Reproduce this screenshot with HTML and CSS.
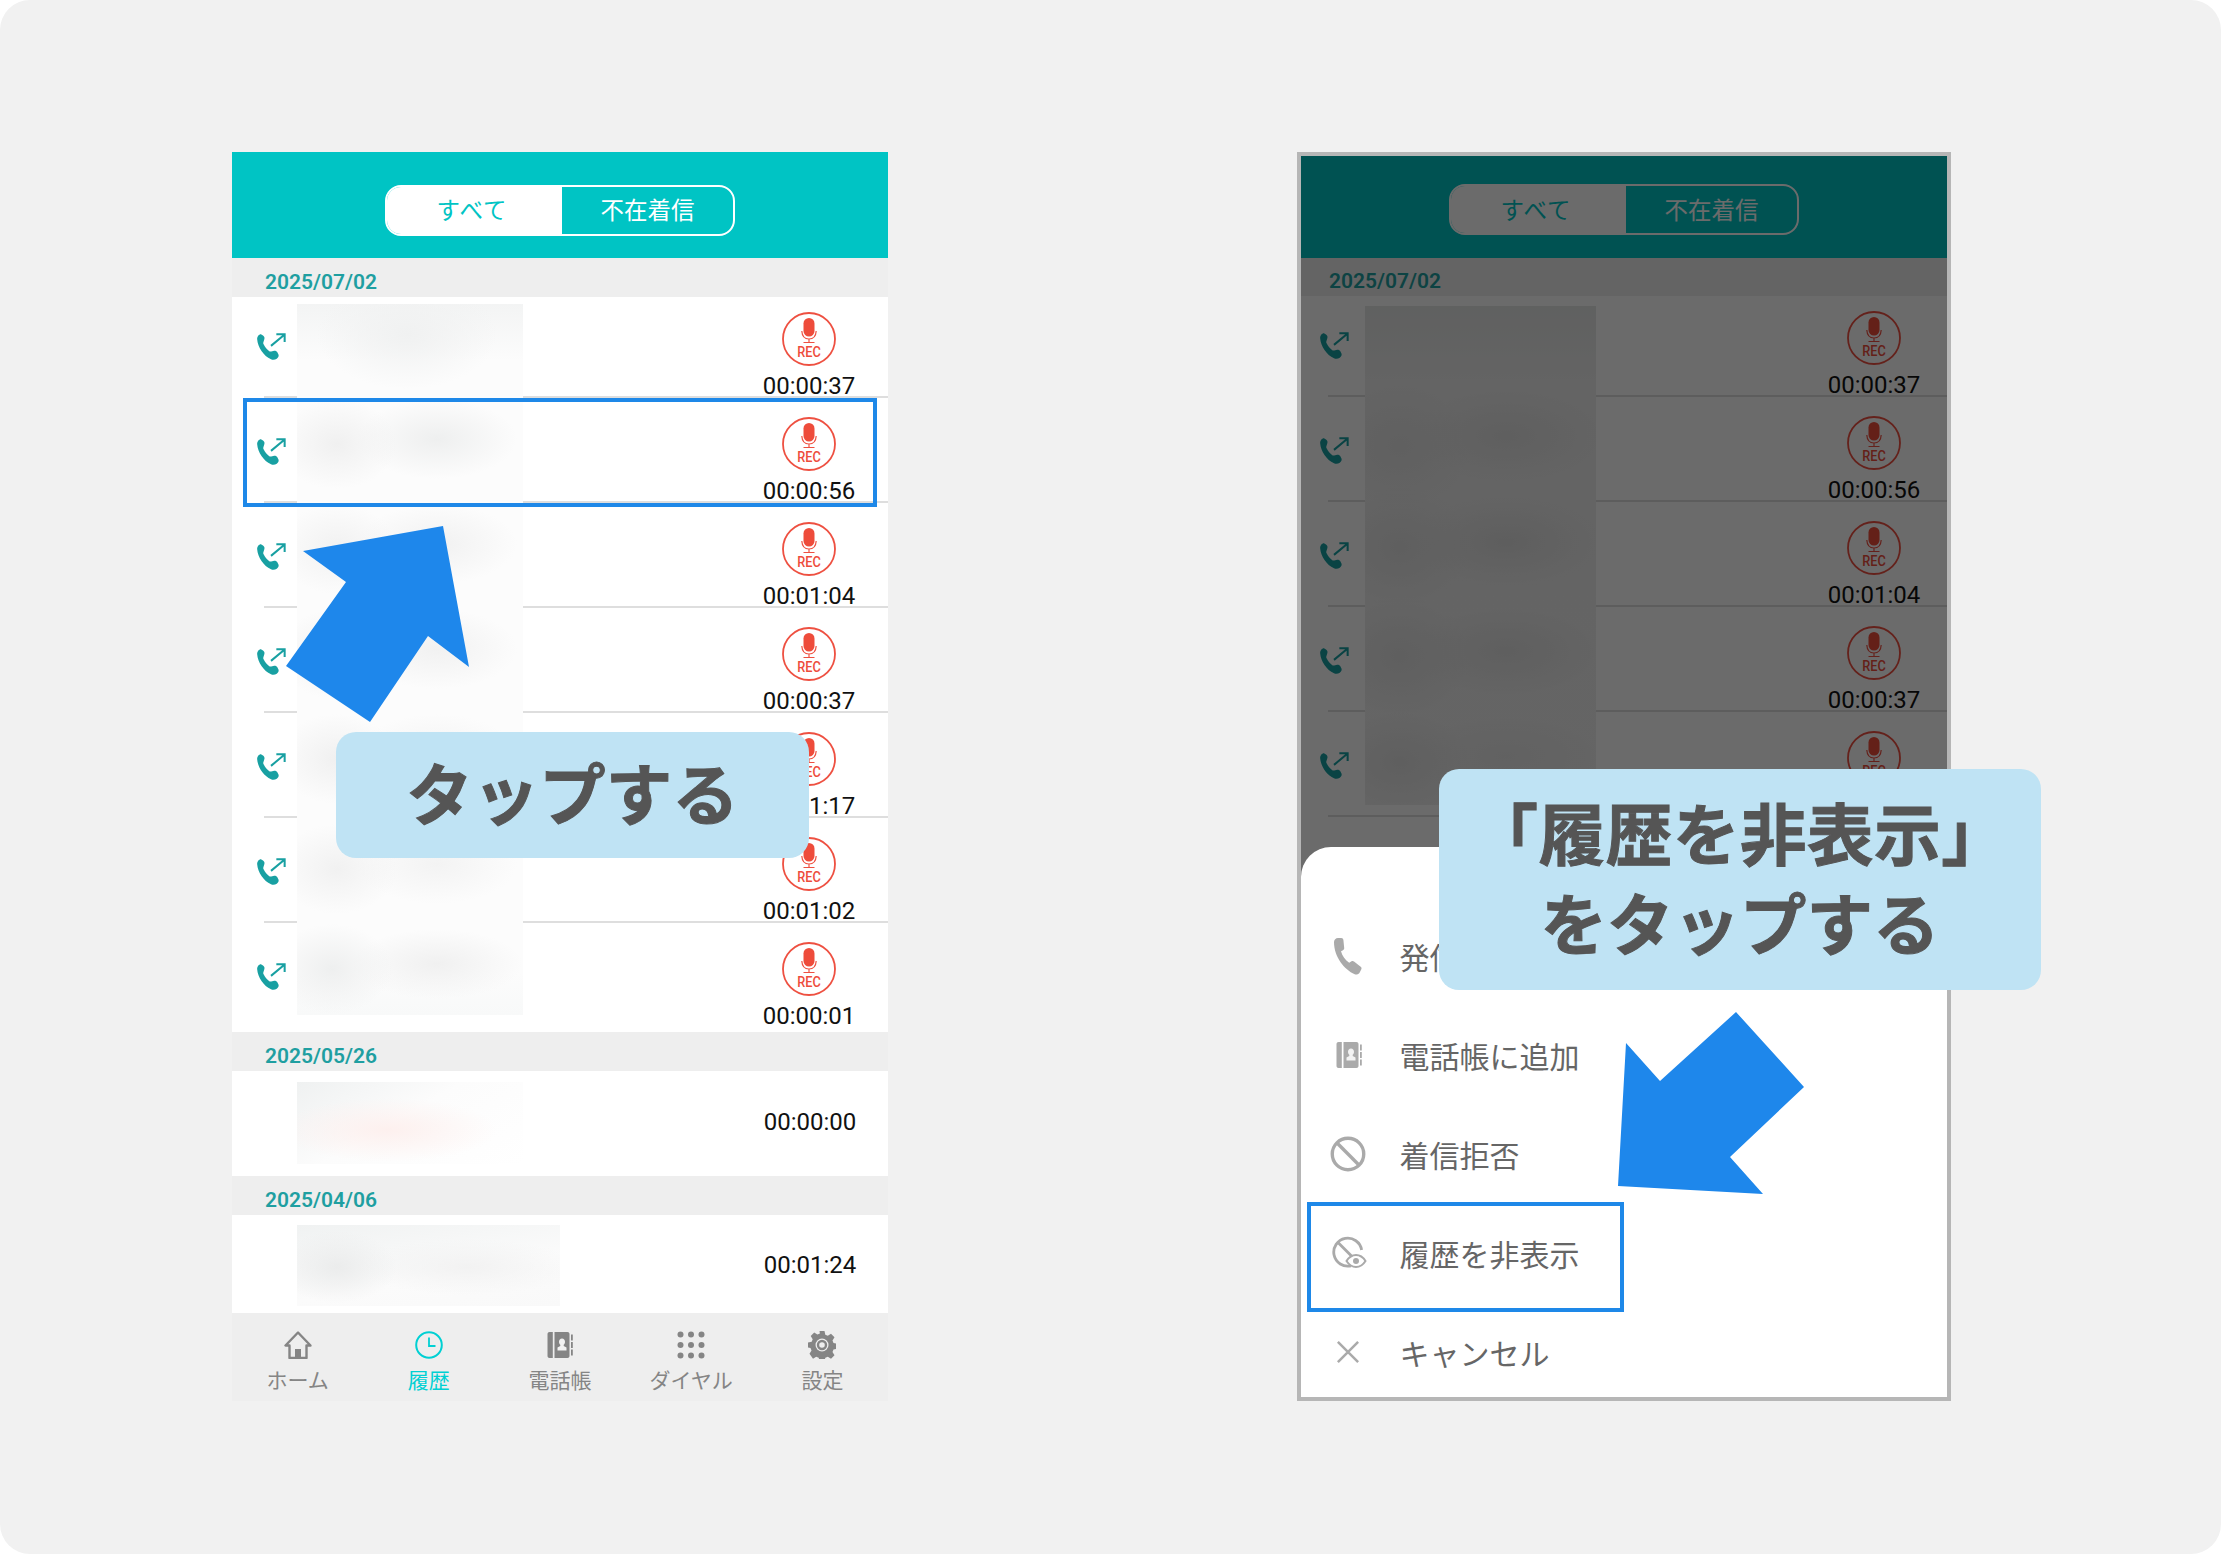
FILE: index.html
```html
<!DOCTYPE html>
<html lang="ja">
<head>
<meta charset="utf-8">
<title>履歴を非表示</title>
<link rel="stylesheet" href="styles.css">
</head>
<body>
<svg class="defs" width="0" height="0" aria-hidden="true">
  <defs>
    <symbol id="i-call" viewBox="0 0 30 30">
      <path d="M2 6.500C2 4.200 3.600 2 5.600 2L7.500 3.200C8.600 4 9.200 5.200 8.800 6.600L7.800 9.800C7.600 10.600 7.800 11.200 8.200 11.800C9.500 14.400 11.200 16.400 13.400 18C14 18.400 14.600 18.400 15.200 18.200L18 17.600C19.200 17.400 20.200 18 20.800 18.800L22 21C22.600 22.400 21.800 24 20.400 25C18.800 26.200 16.800 26.400 15 25.600C8 22.200 2.600 14.600 2 6.500Z" fill="#18a0a2"/>
      <path d="M15 13L27.500 2.500M20 2.100h7.800v7.300" fill="none" stroke="#18a0a2" stroke-width="1.900"/>
    </symbol>
    <symbol id="i-rec" viewBox="0 0 54 54">
      <circle cx="27" cy="27" r="26" fill="#fff" stroke="#ee5041" stroke-width="1.800"/>
      <rect x="21.500" y="6" width="11" height="18.500" rx="5.500" fill="#ee4c3b"/>
      <path d="M19.800 19c.3 5 3 8 7.200 8s6.900-3 7.200-8M27 27v3.200M21.500 30.500h11" fill="none" stroke="#ee5041" stroke-width="1.200"/>
    </symbol>
    <symbol id="i-book" viewBox="0 0 28 28">
      <path d="M3.500 1h3.300v26H3.500c-1.100 0-2-.9-2-2V3c0-1.100.9-2 2-2zM8.500 1h13c1.100 0 2 .9 2 2v22c0 1.100-.9 2-2 2h-13z" fill="currentColor"/>
      <path d="M25 3.500h1.800v6H25zM25 11h1.800v6H25zM25 18.500h1.800v6H25z" fill="currentColor"/>
      <path d="M16 7.500c1.800 0 3 1.400 3 3.300 0 1.300-.5 2.400-1.300 3v1.200l2.800 1.400v3.100H11.500v-3.100l2.800-1.400v-1.200c-.8-.6-1.300-1.700-1.300-3 0-1.900 1.200-3.300 3-3.300z" fill="#f2f2f2"/>
    </symbol>
  </defs>
</svg>
<main class="canvas">
  <section class="shot shot-left">
    <div class="phone">
      <header class="topbar">
        <div class="toggle"><span class="seg seg-on">すべて</span><span class="seg">不在着信</span></div>
      </header>
      <div class="date">2025/07/02</div>
      <div class="group">
        <div class="smudge smudge-a"></div>
        <div class="row rec"><svg class="call"><use href="#i-call"/></svg><div class="right"><svg class="recicon"><use href="#i-rec"/></svg><span class="recword">REC</span><span class="time">00:00:37</span></div></div>
        <div class="row rec"><svg class="call"><use href="#i-call"/></svg><div class="right"><svg class="recicon"><use href="#i-rec"/></svg><span class="recword">REC</span><span class="time">00:00:56</span></div></div>
        <div class="row rec"><svg class="call"><use href="#i-call"/></svg><div class="right"><svg class="recicon"><use href="#i-rec"/></svg><span class="recword">REC</span><span class="time">00:01:04</span></div></div>
        <div class="row rec"><svg class="call"><use href="#i-call"/></svg><div class="right"><svg class="recicon"><use href="#i-rec"/></svg><span class="recword">REC</span><span class="time">00:00:37</span></div></div>
        <div class="row rec"><svg class="call"><use href="#i-call"/></svg><div class="right"><svg class="recicon"><use href="#i-rec"/></svg><span class="recword">REC</span><span class="time">00:01:17</span></div></div>
        <div class="row rec"><svg class="call"><use href="#i-call"/></svg><div class="right"><svg class="recicon"><use href="#i-rec"/></svg><span class="recword">REC</span><span class="time">00:01:02</span></div></div>
        <div class="row rec last"><svg class="call"><use href="#i-call"/></svg><div class="right"><svg class="recicon"><use href="#i-rec"/></svg><span class="recword">REC</span><span class="time">00:00:01</span></div></div>
      </div>
      <div class="date">2025/05/26</div>
      <div class="group">
        <div class="smudge smudge-b"></div>
        <div class="row plain last"><div class="right"><span class="time">00:00:00</span></div></div>
      </div>
      <div class="date date-short">2025/04/06</div>
      <div class="group">
        <div class="smudge smudge-c"></div>
        <div class="row plain last short"><div class="right"><span class="time">00:01:24</span></div></div>
      </div>
      <nav class="tabs">
        <div class="tab"><svg class="tabicon" viewBox="0 0 28 28"><path d="M14 1.500L1.500 14.500H5.500V27h17V14.500h4z" fill="none" stroke="currentColor" stroke-width="2.400" stroke-linejoin="round"/><path d="M11 27v-9h6v9z" fill="currentColor"/></svg><span>ホーム</span></div>
        <div class="tab tab-on"><svg class="tabicon" viewBox="0 0 28 28"><circle cx="14" cy="14" r="12.800" fill="none" stroke="currentColor" stroke-width="2"/><path d="M14 6.500V15h6.500" fill="none" stroke="currentColor" stroke-width="1.800"/></svg><span>履歴</span></div>
        <div class="tab"><svg class="tabicon"><use href="#i-book"/></svg><span>電話帳</span></div>
        <div class="tab"><svg class="tabicon" viewBox="0 0 28 28"><g fill="currentColor"><circle cx="3.500" cy="3.500" r="3"/><circle cx="14" cy="3.500" r="3"/><circle cx="24.500" cy="3.500" r="3"/><circle cx="3.500" cy="14" r="3"/><circle cx="14" cy="14" r="3"/><circle cx="24.500" cy="14" r="3"/><circle cx="3.500" cy="24.500" r="3"/><circle cx="14" cy="24.500" r="3"/><circle cx="24.500" cy="24.500" r="3"/></g></svg><span>ダイヤル</span></div>
        <div class="tab"><svg class="tabicon" viewBox="0 0 28 28"><path d="M11.500 0h5l.8 3.700 2.500 1 3.200-2 3.500 3.500-2 3.200 1 2.500 3.700.8v5l-3.700.8-1 2.500 2 3.200-3.500 3.500-3.200-2-2.500 1-.8 3.700h-5l-.8-3.700-2.500-1-3.200 2L1.500 22.700l2-3.200-1-2.500L0 16.500v-5l3.700-.8 1-2.500-2-3.200L6.200 1.500l3.200 2 2.500-1z" fill="currentColor"/><circle cx="14" cy="14" r="6.500" fill="#eee"/><circle cx="14" cy="14" r="4" fill="none" stroke="currentColor" stroke-width="2.400"/></svg><span>設定</span></div>
      </nav>
    </div>
    <div class="hl hl-row"></div>
    <svg class="arrow arrow-left" viewBox="0 0 200 210"><polygon points="17,25 157,0 183,141 142,110 84,196 0,140 60,56"/></svg>
    <div class="bubble bubble-left">タップする</div>
  </section>

  <section class="shot shot-right">
    <div class="frame">
      <div class="phone phone-dim">
        <header class="topbar">
          <div class="toggle"><span class="seg seg-on">すべて</span><span class="seg">不在着信</span></div>
        </header>
        <div class="date">2025/07/02</div>
        <div class="group">
          <div class="smudge smudge-d"></div>
          <div class="row rec"><svg class="call"><use href="#i-call"/></svg><div class="right"><svg class="recicon"><use href="#i-rec"/></svg><span class="recword">REC</span><span class="time">00:00:37</span></div></div>
          <div class="row rec"><svg class="call"><use href="#i-call"/></svg><div class="right"><svg class="recicon"><use href="#i-rec"/></svg><span class="recword">REC</span><span class="time">00:00:56</span></div></div>
          <div class="row rec"><svg class="call"><use href="#i-call"/></svg><div class="right"><svg class="recicon"><use href="#i-rec"/></svg><span class="recword">REC</span><span class="time">00:01:04</span></div></div>
          <div class="row rec"><svg class="call"><use href="#i-call"/></svg><div class="right"><svg class="recicon"><use href="#i-rec"/></svg><span class="recword">REC</span><span class="time">00:00:37</span></div></div>
          <div class="row rec"><svg class="call"><use href="#i-call"/></svg><div class="right"><svg class="recicon"><use href="#i-rec"/></svg><span class="recword">REC</span></div></div>
        </div>
        <div class="scrim"></div>
        <div class="sheet">
          <div class="item"><svg class="itemicon itemicon-phone" viewBox="0 0 30 38"><path d="M1 5C1 2.800 2.800 1 5 1h3.200c1.200 0 2.100.9 2.200 2l.8 8c.1.900-.4 1.800-1.200 2.200l-2 1.100c1.300 4.700 4.200 8.700 8.200 11.400l2.300-1.400c.8-.5 1.800-.4 2.500.2l6.700 5.300c.9.700 1.100 1.900.5 2.800l-1.500 2.800c-1 1.700-3.100 2.500-5 1.900C11.300 32.500 1 20 1 5z" fill="#aaa"/></svg><span>発信</span></div>
          <div class="item"><svg class="itemicon itemicon-book"><use href="#i-book"/></svg><span>電話帳に追加</span></div>
          <div class="item"><svg class="itemicon" viewBox="0 0 32 32"><circle cx="16" cy="16" r="14" fill="none" stroke="#aaa" stroke-width="3"/><path d="M6.500 6.500l19 19" stroke="#aaa" stroke-width="3"/></svg><span>着信拒否</span></div>
          <div class="item"><svg class="itemicon itemicon-eye" viewBox="0 0 36 32"><path d="M19 28.800A14 14 0 1 1 29.600 13" fill="none" stroke="#aaa" stroke-width="2.800"/><path d="M6 5.500l14 14" stroke="#aaa" stroke-width="2.800"/><path d="M14.500 24c2.600-4 6-6 9.500-6s7 2 9.500 6c-2.500 4-6 6-9.500 6s-6.900-2-9.500-6z" fill="#fff" stroke="#aaa" stroke-width="2"/><circle cx="24" cy="24" r="3" fill="#aaa"/></svg><span>履歴を非表示</span></div>
          <div class="item"><svg class="itemicon" viewBox="0 0 32 32"><path d="M7 7l18 18M25 7L7 25" stroke="#aaa" stroke-width="2.200"/></svg><span>キャンセル</span></div>
        </div>
      </div>
    </div>
    <div class="hl hl-item"></div>
    <svg class="arrow arrow-right" viewBox="0 0 190 185"><polygon points="118,0 186,75 112,145 145,182 0,174 8,31 42,69"/></svg>
    <div class="bubble bubble-right"><p class="bubble-line bubble-line-wide">「履歴を非表示」</p><p class="bubble-line">をタップする</p></div>
  </section>
</main>
</body>
</html>
```

FILE: styles.css
```css
* { box-sizing: border-box; }
html, body { margin: 0; padding: 0; background: #fff; }
body { width: 2221px; height: 1554px; overflow: hidden; font-family: Roboto, "Noto Sans CJK JP", sans-serif; }
.defs { position: absolute; }
.canvas { width: 2221px; height: 1554px; background: #f1f1f1; border-radius: 30px; position: relative; display: flex; padding: 152px 0 0 232px; }
.shot { position: relative; }
.shot-left { width: 656px; height: 1249px; }
.shot-right { width: 654px; height: 1249px; margin-left: 409px; }
.phone { position: relative; width: 656px; height: 1249px; overflow: hidden; background: #fff; }
.frame { border: 4px solid #b6b6b6; width: 654px; height: 1249px; overflow: hidden; }
.phone-dim { width: 646px; height: 1241px; }
.topbar { height: 106px; background: #00c4c4; display: flex; align-items: center; justify-content: center; padding-top: 10px; }
.phone-dim .topbar { height: 102px; padding-top: 5px; }
.toggle { width: 350px; height: 51px; display: flex; border: 2px solid #fff; border-radius: 16px; overflow: hidden; font-family: "Noto Sans CJK JP", sans-serif; font-size: 23.500px; color: #fff; }
.seg { flex: 1; display: flex; align-items: center; justify-content: center; line-height: 1; }
.seg-on { flex: 0 0 175px; background: #fff; color: #00c4c4; letter-spacing: 1px; padding-right: 5px; }
.date { height: 39px; background: #eee; padding: 10px 0 0 33px; font: 600 21px/28px Roboto, sans-serif; color: #1f9fa1; }
.phone-dim .date { height: 38px; padding: 9px 0 0 28px; }
.group { position: relative; background: #fff; }
.row { position: relative; height: 105px; display: flex; }
.row::after { content: ""; position: absolute; left: 32px; right: 0; top: 99px; height: 2px; background: #dedede; }
.phone-dim .row::after { left: 27px; }
.row.last::after { display: none; }
.row.short { height: 99px; }
.call { width: 32px; height: 32px; margin: 35px 0 0 23px; flex: none; position: relative; }
.phone-dim .call { margin-left: 17px; }
.right { position: absolute; right: 32px; top: 15px; width: 92px; display: flex; flex-direction: column; align-items: center; z-index: 2; }
.phone-dim .right { right: 27px; }
.rec .right { right: 33px; }
.phone-dim .rec .right { right: 27px; }
.recicon { width: 54px; height: 54px; }
.recword { position: absolute; top: 32px; left: 0; right: 0; text-align: center; font: 500 14.500px/18px Roboto, sans-serif; color: #ee4c3b; transform: scaleX(.88); }
.time { font: 400 24px/28px Roboto, sans-serif; color: #111; white-space: nowrap; margin-top: 5.500px; }
.plain .right { top: 31px; }
.short .right { top: 30px; }
.smudge { position: absolute; left: 65px; width: 226px; overflow: hidden; z-index: 1; }
.smudge-a {
  top: 7px; height: 711px;
  background:
    radial-gradient(ellipse 90px 55px at 110px 30px, #f0f1f1, transparent),
    radial-gradient(ellipse 60px 45px at 40px 140px, #f0f0f0, transparent),
    radial-gradient(ellipse 80px 40px at 140px 135px, #eeefef, transparent),
    radial-gradient(ellipse 60px 45px at 40px 245px, #f1f1f1, transparent),
    radial-gradient(ellipse 80px 40px at 140px 240px, #f1f1f1, transparent),
    radial-gradient(ellipse 60px 45px at 40px 350px, #f0f0f0, transparent),
    radial-gradient(ellipse 80px 40px at 140px 345px, #f1f1f1, transparent),
    radial-gradient(ellipse 60px 45px at 40px 455px, #f0f0f0, transparent),
    radial-gradient(ellipse 80px 40px at 140px 450px, #f3f3f3, transparent),
    radial-gradient(ellipse 60px 45px at 40px 565px, #f1f1f1, transparent),
    radial-gradient(ellipse 80px 40px at 140px 560px, #f3f3f3, transparent),
    radial-gradient(ellipse 60px 45px at 35px 665px, #eeefef, transparent),
    radial-gradient(ellipse 85px 35px at 140px 660px, #f0f0f0, transparent),
    linear-gradient(180deg, #f3f4f4 0, #fcfcfc 8%, #fcfcfc 94%, #f8f9f9 100%);
}
.smudge-b {
  top: 11px; height: 82px;
  background:
    radial-gradient(ellipse 110px 32px at 90px 48px, #fdf0ee, transparent),
    linear-gradient(150deg, #eff1f1 0, #fcfcfc 45%, #fff 100%);
}
.smudge-c {
  left: 65px; width: 263px; top: 10px; height: 81px;
  background:
    radial-gradient(ellipse 60px 36px at 40px 42px, #ebecec, transparent),
    radial-gradient(ellipse 110px 28px at 170px 42px, #f2f2f2, transparent),
    linear-gradient(170deg, #f0f2f2 0, #fbfbfb 60%, #f9f9f9 100%);
}
.smudge-d {
  left: 64px; width: 231px; top: 10px; height: 499px;
  background:
    radial-gradient(ellipse 70px 60px at 35px 140px, #e4e4e4, transparent),
    radial-gradient(ellipse 95px 45px at 141px 130px, #e2e2e2, transparent),
    radial-gradient(ellipse 70px 60px at 35px 241px, #e2e2e2, transparent),
    radial-gradient(ellipse 95px 45px at 141px 236px, #e0e0e0, transparent),
    radial-gradient(ellipse 70px 60px at 35px 350px, #e2e2e2, transparent),
    radial-gradient(ellipse 95px 45px at 141px 345px, #e2e2e2, transparent),
    radial-gradient(ellipse 70px 50px at 35px 456px, #e2e2e2, transparent),
    radial-gradient(ellipse 95px 40px at 141px 450px, #e8e8e8, transparent),
    linear-gradient(180deg, #e4e6e5 0, #eeeeee 15%, #f0f0f0 100%);
}
.tabs { position: absolute; left: 0; right: 0; bottom: 0; height: 88px; background: #eee; display: grid; grid-template-columns: repeat(5, 1fr); font-family: "Noto Sans CJK JP", sans-serif; }
.tab { display: flex; flex-direction: column; align-items: center; padding-top: 18px; color: #858585; font-size: 21px; line-height: 30px; }
.tab-on { color: #00d0d3; }
.tabicon { width: 28px; height: 28px; margin-bottom: 6px; flex: none; }
.tab span { margin-top: -1px; }
.scrim { position: absolute; inset: 0; background: rgba(0, 0, 0, .58); z-index: 3; }
.sheet { position: absolute; left: 0; right: 0; bottom: 0; height: 550px; background: #fff; border-radius: 30px 30px 0 0; padding-top: 59px; z-index: 4; overflow: hidden; font-family: "Noto Sans CJK JP", sans-serif; font-size: 30px; color: #666; }
.item { height: 99px; display: flex; align-items: center; padding-left: 98.500px; position: relative; line-height: 1; }
.itemicon { position: absolute; left: 29px; top: 50%; width: 36px; height: 36px; transform: translateY(-50%); }
.itemicon-phone { left: 32px; width: 30px; height: 38px; }
.itemicon-book { color: #aaa; width: 28px; height: 30px; left: 34px; }
.itemicon-eye { left: 31px; }
.hl { position: absolute; border: 4px solid #1e88e8; z-index: 6; }
.hl-row { left: 11px; top: 246px; width: 634px; height: 109px; }
.hl-item { left: 10px; top: 1050px; width: 317px; height: 110px; }
.arrow { position: absolute; z-index: 7; overflow: visible; }
.arrow polygon { fill: #1e87eb; }
.arrow-left { left: 54px; top: 374px; width: 200px; height: 210px; }
.arrow-right { left: 321px; top: 860px; width: 190px; height: 185px; }
.bubble { position: absolute; z-index: 8; background: #bfe3f4; color: #555; border-radius: 20px; font-family: "Noto Sans CJK JP", sans-serif; font-weight: 700; -webkit-text-stroke: 1px #555; display: flex; flex-direction: column; align-items: center; justify-content: center; text-align: center; white-space: nowrap; padding-bottom: 8px; }
.bubble-left { left: 104px; top: 580px; width: 473px; height: 126px; font-size: 66.500px; }
.bubble-right { left: 142px; top: 617px; width: 602px; height: 221px; font-size: 66.500px; line-height: 90px; }
.bubble-line { margin: 0; }
.bubble-line-wide { letter-spacing: .6px; }
```
